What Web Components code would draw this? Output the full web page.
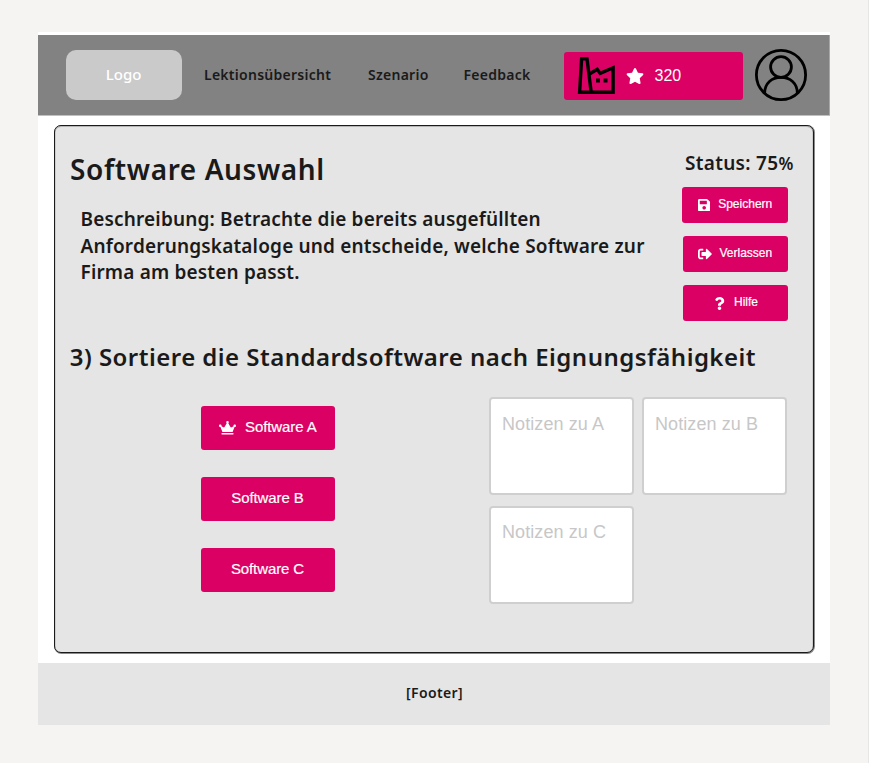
<!DOCTYPE html>
<html lang="de">
<head>
<meta charset="utf-8">
<title>Software Auswahl</title>
<style>
html, body { margin: 0; height: 100%; }
body { background: #f5f4f2; color: #1a1a1a; font-family: "Noto Sans", sans-serif; overflow: hidden; }
</style>
</head>
<body>
<lesson-page></lesson-page>
<script>
const define = (name, html) => customElements.define(name, class extends HTMLElement {
  constructor() {
    super();
    const t = document.createElement('template');
    t.innerHTML = html;
    this.attachShadow({ mode: 'open' }).append(t.content.cloneNode(true));
  }
});

const ICONS = {
  star: ['0 0 576 512', 'M259.3 17.8L194 150.2 47.9 171.5c-26.2 3.8-36.7 36.1-17.7 54.6l105.7 103-25 145.5c-4.5 26.3 23.2 46 46.4 33.7L288 439.6l130.7 68.7c23.2 12.2 50.9-7.4 46.4-33.7l-25-145.5 105.7-103c19-18.5 8.5-50.8-17.7-54.6L382 150.2 316.7 17.8c-11.7-23.6-45.6-23.9-57.4 0z'],
  crown: ['0 0 640 512', 'M528 448H112c-8.8 0-16 7.2-16 16v32c0 8.8 7.2 16 16 16h416c8.8 0 16-7.2 16-16v-32c0-8.8-7.2-16-16-16zm64-320c-26.5 0-48 21.5-48 48 0 7.1 1.6 13.7 4.4 19.8L476 239.2c-15.4 9.2-35.3 4-44.2-11.6L350.3 85C361 76.2 368 63 368 48c0-26.5-21.5-48-48-48s-48 21.5-48 48c0 15 7 28.2 17.7 37l-81.5 142.6c-8.9 15.6-28.9 20.8-44.2 11.6l-72.3-43.4c2.7-6 4.4-12.7 4.4-19.8 0-26.5-21.5-48-48-48S0 149.5 0 176s21.5 48 48 48c2.6 0 5.2-.4 7.7-.8L128 416h384l72.3-192.8c2.5.4 5.1.8 7.7.8 26.5 0 48-21.5 48-48s-21.5-48-48-48z'],
  save: ['0 32 448 448', 'M433.941 129.941l-83.882-83.882A48 48 0 0 0 316.118 32H48C21.49 32 0 53.49 0 80v352c0 26.51 21.49 48 48 48h352c26.51 0 48-21.49 48-48V163.882a48 48 0 0 0-14.059-33.941zM224 416c-35.346 0-64-28.654-64-64 0-35.346 28.654-64 64-64s64 28.654 64 64c0 35.346-28.654 64-64 64zm96-304.52V212c0 6.627-5.373 12-12 12H76c-6.627 0-12-5.373-12-12V108c0-6.627 5.373-12 12-12h228.52c3.183 0 6.235 1.264 8.485 3.515l3.48 3.48A11.996 11.996 0 0 1 320 111.48z'],
  exit: ['0 0 512 512', 'M497 273L329 441c-15 15-41 4.5-41-17v-96H152c-13.3 0-24-10.7-24-24v-96c0-13.3 10.7-24 24-24h136V88c0-21.4 25.9-32 41-17l168 168c9.3 9.4 9.3 24.6 0 34zM192 436v-40c0-6.6-5.4-12-12-12H96c-17.7 0-32-14.3-32-32V160c0-17.7 14.3-32 32-32h84c6.6 0 12-5.4 12-12V76c0-6.6-5.4-12-12-12H96c-53 0-96 43-96 96v192c0 53 43 96 96 96h84c6.6 0 12-5.4 12-12z'],
  help: ['0 0 384 512', 'M202.021 0C122.202 0 70.503 32.703 29.914 91.026c-7.363 10.58-5.093 25.086 5.178 32.874l43.138 32.709c10.373 7.865 25.132 6.026 33.253-4.148 25.049-31.381 43.63-49.449 82.757-49.449 30.764 0 68.816 19.799 68.816 49.631 0 22.552-18.617 34.134-48.993 51.164-35.423 19.86-82.299 44.576-82.299 106.405V320c0 13.255 10.745 24 24 24h72.471c13.255 0 24-10.745 24-24v-5.773c0-42.86 125.268-44.645 125.268-160.627C377.504 66.256 286.902 0 202.021 0zM192 373.459c-38.196 0-69.271 31.075-69.271 69.271 0 38.195 31.075 69.27 69.271 69.27s69.271-31.075 69.271-69.27-31.075-69.271-69.271-69.271z']
};
customElements.define('ui-icon', class extends HTMLElement {
  connectedCallback() {
    if (this.shadowRoot) return;
    const [box, d] = ICONS[this.getAttribute('name')];
    this.attachShadow({ mode: 'open' }).innerHTML =
      `<style>:host{display:block;flex:none;width:13px;height:13px}svg{display:block;width:100%;height:100%}</style>
       <svg viewBox="${box}" fill="currentColor"><path d="${d}"/></svg>`;
  }
});

define('app-logo', `<style>
:host { display: flex; align-items: center; justify-content: center; box-sizing: border-box; width: 116px; height: 49.5px;
  padding-bottom: 2px; border-radius: 10px; background: #cacaca; color: #fff; font: 500 15px "Noto Sans", sans-serif; }
</style><slot></slot>`);

define('nav-link', `<style>
:host { display: block; font: 600 14px/20px "Noto Sans", sans-serif; letter-spacing: .27px; white-space: nowrap; }
</style><slot></slot>`);

define('factory-icon', `<style>:host{display:block;flex:none;width:38px;height:38px}svg{display:block}</style>
<svg width="38" height="38" viewBox="577 57 38 38" fill="none" stroke="#000" stroke-width="3.4">
<path d="M581.6 58.9H587L591.2 92.2H579.6Z"/>
<path d="M589.5 74L597.2 69.2 600.2 73.4 613.1 67.8V92.2H590"/>
<path d="M596 78.6h4v4h-4zM603.5 78.6h4v4h-4z" fill="#000" stroke="none"/></svg>`);

define('score-badge', `<style>
:host { display: flex; align-items: center; box-sizing: border-box; width: 179px; height: 48px; padding-left: 13px;
  border-radius: 3px; background: #db0063; color: #fff; font: 16px/20px "Liberation Sans", Arial, sans-serif; }
ui-icon { width: 18px; height: 16px; margin: 0 10px 0 11px; }
</style><factory-icon></factory-icon><ui-icon name="star"></ui-icon><slot></slot>`);

define('user-avatar', `<style>:host{display:block;width:52px;height:52px}svg{display:block}</style>
<svg width="52" height="52" viewBox="0 0 52 52" fill="none" stroke="#000" stroke-width="2.8">
<circle cx="26" cy="26" r="24.6"/><circle cx="26" cy="18" r="10.4"/><path d="M9.6 44.5C9.6 34 17 28.4 26 28.4S42.4 34 42.4 44.5"/></svg>`);

define('app-header', `<style>
:host { display: grid; grid-template-columns: 138.4px 164px 95.5px 101px 190.4px 52px; align-items: center;
  height: 80px; padding-left: 27.6px; background: #828282; border-bottom: 1px solid #c0c0c0; box-shadow: inset -1px 0 #a8a8a8; box-sizing: content-box; }
score-badge { margin-top: 2px; }
</style>
<app-logo>Logo</app-logo><nav-link>Lektionsübersicht</nav-link><nav-link>Szenario</nav-link><nav-link>Feedback</nav-link>
<score-badge>320</score-badge><user-avatar></user-avatar>`);

define('pink-button', `<style>
:host { display: flex; align-items: center; box-sizing: border-box; border-radius: 3px; background: #db0063; color: #fff;
  font: 12px/16px "Liberation Sans", Arial, sans-serif; white-space: nowrap; }
span { margin-top: -2px; -webkit-text-stroke: .2px currentColor; }
</style><slot name="icon"></slot><span><slot></slot></span>`);

define('note-box', `<style>
:host { display: block; box-sizing: border-box; width: 145px; height: 98px; padding: 14.5px 11px; border: 2px solid #cfcfcf;
  border-radius: 4px; background: #fff; color: #c7c7c7; font: 18px/20px "Liberation Sans", Arial, sans-serif; letter-spacing: .08px; }
</style><slot></slot>`);

define('status-panel', `<style>
:host { display: grid; justify-items: end; align-content: start; padding-top: 2px; }
.status { height: 26px; font: 600 19px/26px "Noto Sans", sans-serif; letter-spacing: .3px; white-space: nowrap; width: 116px; margin-right: -13px; }
.status small { font-size: 17px; letter-spacing: 0; }
pink-button { width: 105px; height: 36px; margin-bottom: 13px; }
.save { width: 106px; margin-top: 11px; padding-left: 16px; }
.exit { padding-left: 15px; }
.help { padding-left: 31px; margin: 0; }
.save ui-icon { width: 12.4px; height: 12.4px; margin-right: 7.8px; }
.exit ui-icon { width: 14px; height: 14px; margin-right: 7.5px; }
.help ui-icon { width: 11px; margin-right: 9px; }
</style>
<div class="status">Status: 75<small>%</small></div>
<pink-button class="save"><ui-icon slot="icon" name="save"></ui-icon>Speichern</pink-button>
<pink-button class="exit"><ui-icon slot="icon" name="exit"></ui-icon>Verlassen</pink-button>
<pink-button class="help"><ui-icon slot="icon" name="help"></ui-icon>Hilfe</pink-button>`);

define('software-ranking', `<style>
:host { display: grid; grid-template-rows: repeat(3, 44px); row-gap: 27px; }
pink-button { font-size: 15px; line-height: 20px; letter-spacing: -.1px; width: 134px; justify-content: center; }
.first { justify-content: flex-start; padding-left: 18px; }
ui-icon { width: 17px; height: 13.6px; margin-right: 9.5px; }
</style>
<pink-button class="first"><ui-icon slot="icon" name="crown"></ui-icon>Software A</pink-button>
<pink-button>Software B</pink-button>
<pink-button>Software C</pink-button>`);

define('task-panel', `<style>
:host { display: block; box-sizing: border-box; width: 760px; height: 528px; margin: 9px 0 0 16px; padding: 22px 25px 0 14.5px;
  border: 1px solid #1a1a1a; border-radius: 7px; background: #e5e5e5; box-shadow: .5px .5px 0 .5px #8a8a8a, inset 0 .5px 0 .5px #b5b5b5; }
.intro { display: flex; justify-content: space-between; height: 193px; }
h1 { margin: 2px 0 18px .5px; font: 600 28px/38px "Noto Sans", sans-serif; letter-spacing: .6px; }
p { margin: 0 0 0 11px; font: 600 19px/26.5px "Noto Sans", sans-serif; letter-spacing: .17px; white-space: nowrap; }
h2 { margin: 0 0 0 .3px; font: 600 24px/32px "Noto Sans", sans-serif; letter-spacing: .465px; white-space: nowrap; }
.work { display: flex; justify-content: space-between; margin-top: 24px; }
software-ranking { margin: 9px 0 0 131px; }
.notes { display: grid; grid-template-columns: 145px 145px; gap: 10.5px 8px; margin-right: 1px; }
</style>
<div class="intro">
  <div><h1>Software Auswahl</h1>
  <p>Beschreibung: Betrachte die bereits ausgefüllten<br>Anforderungskataloge und entscheide, welche Software zur<br>Firma am besten passt.</p></div>
  <status-panel></status-panel>
</div>
<h2>3) Sortiere die Standardsoftware nach Eignungsfähigkeit</h2>
<div class="work">
  <software-ranking></software-ranking>
  <div class="notes"><note-box>Notizen zu A</note-box><note-box>Notizen zu B</note-box><note-box>Notizen zu C</note-box></div>
</div>`);

define('app-footer', `<style>
:host { display: flex; align-items: center; justify-content: center; box-sizing: border-box; height: 62px; padding: 0 0 3px 1px;
  background: #e5e5e5; font: 600 14px/20px "Noto Sans", sans-serif; letter-spacing: .35px; }
</style><slot></slot>`);

define('lesson-page', `<style>
:host { display: block; box-sizing: border-box; height: 763px; padding: 32px 0 0 38px; border-right: 1px solid #e6e6e5; }
.frame { box-sizing: border-box; width: 792px; height: 693px; padding-top: 3px; background: #fff; display: flex; flex-direction: column; }
app-footer { margin-top: auto; }
</style>
<div class="frame"><app-header></app-header><task-panel></task-panel><app-footer>[Footer]</app-footer></div>`);
</script>
</body>
</html>
